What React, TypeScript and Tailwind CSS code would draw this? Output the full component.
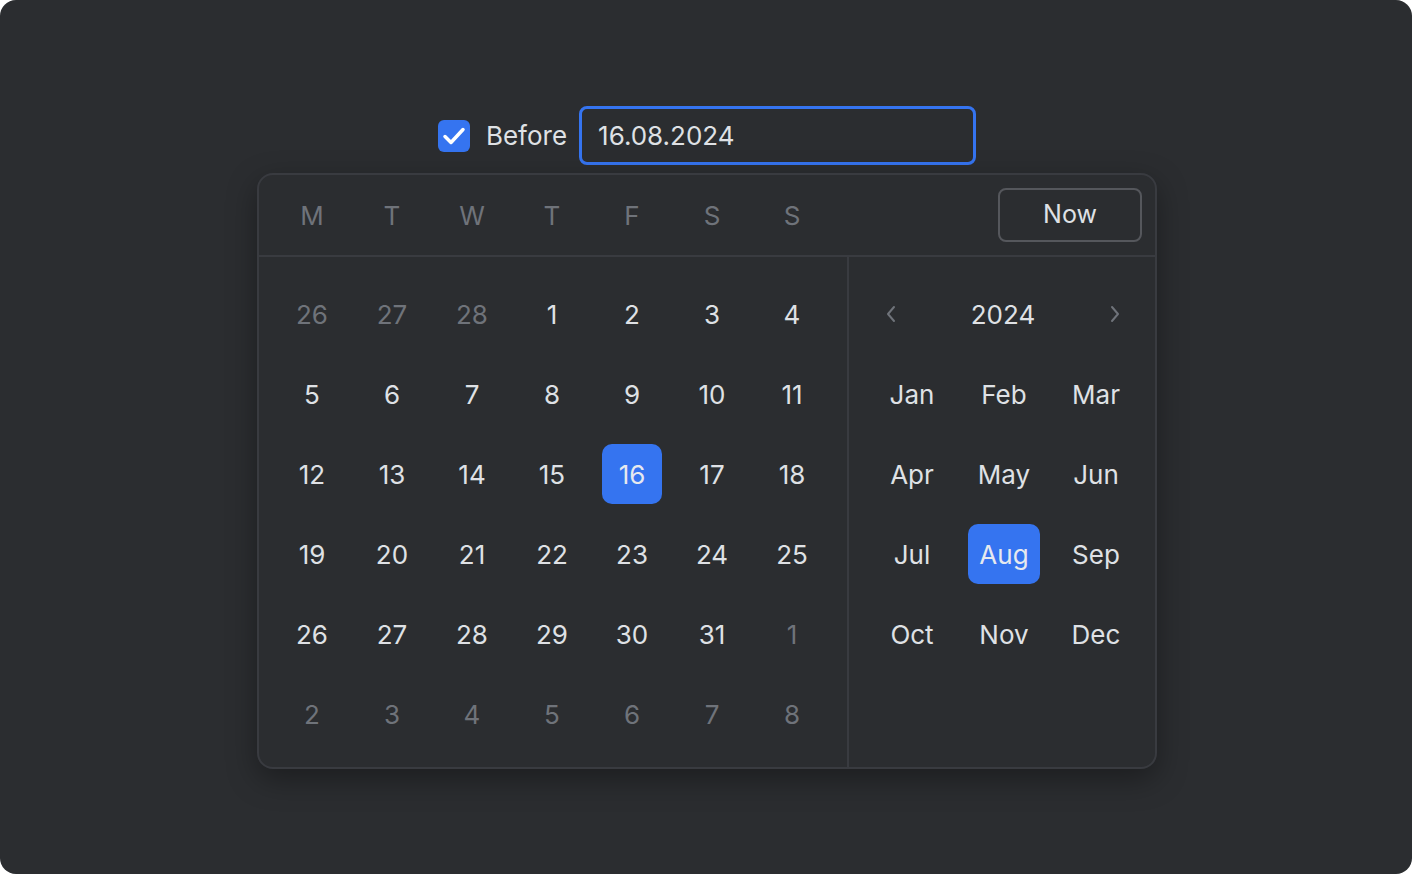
import React from "react";

const weekdays = ["M", "T", "W", "T", "F", "S", "S"];

type Day = { n: number; cur: boolean };

const days: Day[] = [
  ...[26, 27, 28].map((n) => ({ n, cur: false })),
  ...Array.from({ length: 31 }, (_, i) => ({ n: i + 1, cur: true })),
  ...[1, 2, 3, 4, 5, 6, 7, 8].map((n) => ({ n, cur: false })),
];

const months = ["Jan", "Feb", "Mar", "Apr", "May", "Jun", "Jul", "Aug", "Sep", "Oct", "Nov", "Dec"];

export default function App() {
  return (
    <div className="w-[1412px] h-[874px] bg-white">
      <div
        className="w-[1412px] h-[874px] bg-[#2b2d30] rounded-[16px] flex flex-col items-center pt-[106px] text-[#dfe1e5]"
        style={{ fontFamily: "Inter, 'Noto Sans', sans-serif" }}
      >
        <div className="flex items-center h-[59px] ml-[2px]">
          <div className="w-[32px] h-[32px] rounded-[6px] bg-[#3574f0] flex items-center justify-center">
            <svg width="32" height="32" viewBox="0 0 32 32" fill="none">
              <path d="M7 16.5 L13 22.5 L25 9.5" stroke="white" strokeWidth="3.5" strokeLinecap="round" strokeLinejoin="round" />
            </svg>
          </div>
          <span className="ml-[16px] text-[26px] leading-none">Before</span>
          <div className="ml-[12px] w-[397px] h-[59px] rounded-[8px] border-[3px] border-[#3574f0] bg-[#2b2d30] flex items-center pl-[16px]">
            <span className="text-[26px] leading-none mt-[1px]">16.08.2024</span>
          </div>
        </div>

        <div className="mt-[8px] ml-[2px] w-[900px] h-[596px] rounded-[16px] border-2 border-[#393b40] bg-[#2b2d30] shadow-[0_10px_30px_rgba(0,0,0,0.35)] flex flex-col">
          <div className="h-[82px] flex items-center border-b-2 border-[#393b40] pl-[13px] pr-[13px]">
            <div className="grid grid-cols-7 w-[560px]">
              {weekdays.map((d, i) => (
                <div key={i} className="w-[80px] text-center text-[26px] text-[#6f737a]">
                  {d}
                </div>
              ))}
            </div>
            <div className="flex-1" />
            <div className="w-[144px] h-[54px] rounded-[8px] border-2 border-[#55575c] flex items-center justify-center text-[25px]">
              Now
            </div>
          </div>
          <div className="flex flex-1">
            <div className="w-[590px] border-r-2 border-[#393b40] pl-[13px] pt-[17px]">
              <div className="grid grid-cols-7 w-[560px]">
                {days.map((d, i) => {
                  const sel = d.cur && d.n === 16;
                  return (
                    <div key={i} className="w-[80px] h-[80px] flex items-center justify-center">
                      <div
                        className={
                          "w-[60px] h-[60px] rounded-[10px] flex items-center justify-center text-[26px] " +
                          (sel ? "bg-[#3574f0] text-[#e6e9ef]" : d.cur ? "text-[#dfe1e5]" : "text-[#6f737a]")
                        }
                      >
                        {d.n}
                      </div>
                    </div>
                  );
                })}
              </div>
            </div>
            <div className="flex-1 pl-[17px] pt-[17px]">
              <div className="w-[276px] h-[80px] flex items-center justify-between pl-[18px] pr-[20px]">
                <svg width="14" height="20" viewBox="0 0 14 20" fill="none">
                  <path d="M10 3 L4 10 L10 17" stroke="#6f737a" strokeWidth="2" strokeLinecap="round" strokeLinejoin="round" />
                </svg>
                <span className="text-[26px]">2024</span>
                <svg width="14" height="20" viewBox="0 0 14 20" fill="none">
                  <path d="M4 3 L10 10 L4 17" stroke="#6f737a" strokeWidth="2" strokeLinecap="round" strokeLinejoin="round" />
                </svg>
              </div>
              <div className="grid grid-cols-3 w-[276px]">
                {months.map((m) => {
                  const sel = m === "Aug";
                  return (
                    <div key={m} className="h-[80px] flex items-center justify-center">
                      <div
                        className={
                          "w-[72px] h-[60px] rounded-[10px] flex items-center justify-center text-[26px] " +
                          (sel ? "bg-[#3574f0] text-[#e6e9ef]" : "text-[#dfe1e5]")
                        }
                      >
                        {m}
                      </div>
                    </div>
                  );
                })}
              </div>
            </div>
          </div>
        </div>
      </div>
    </div>
  );
}
